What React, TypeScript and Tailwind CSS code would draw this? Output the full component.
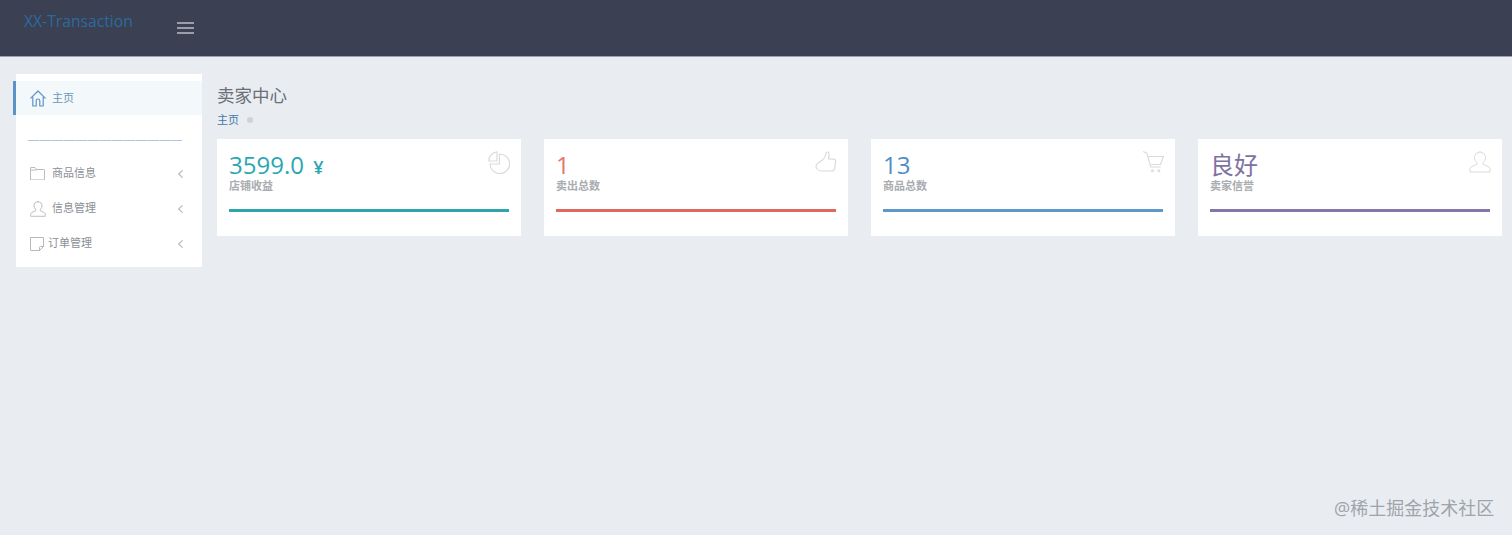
import React from "react";

const font = { fontFamily: '"Open Sans","Noto Sans CJK SC",sans-serif' };

const Svg = ({ w, h, vb, color, sw = 1, children }: { w: number; h: number; vb: string; color: string; sw?: number; children: React.ReactNode }) => (
  <svg width={w} height={h} viewBox={vb} fill="none" stroke={color} strokeWidth={sw} strokeLinecap="round" strokeLinejoin="round">
    {children}
  </svg>
);

const HomeIcon = () => (
  <Svg w={16} h={17} vb="0 0 16 17" color="#5b93c9" sw={1.2}>
    <path d="M0.8 8.2 8 1l7.2 7.2" />
    <path d="M2.8 7v9h3.400v-5.200a1.800 1.800 0 0 1 3.600 0V16h3.400V7" />
  </Svg>
);
const FolderIcon = () => (
  <Svg w={15} h={13} vb="0 0 15 13" color="#b9bcc0">
    <path d="M.5 12.500V1a.5.5 0 0 1 .5-.5h4l1.500 2H14a.5.5 0 0 1 .5.5v9.500z" />
    <path d="M.5 3h6" />
  </Svg>
);
const UserIcon = ({ size, color }: { size: number; color: string }) => (
  <Svg w={size} h={size} vb="0 0 22 22" color={color} sw={22 / size}>
    <path d="M11 1C7.700 1 5.500 3.300 5.500 6.500c0 2.200 1 4 2.500 5.200v1.600c-1.500.9-6.300 2-7 4.300-.2.700 0 3.400 0 3.400h20s.2-2.700 0-3.400c-.7-2.300-5.500-3.400-7-4.300v-1.600c1.500-1.200 2.500-3 2.500-5.200C16.500 3.300 14.300 1 11 1z" />
  </Svg>
);
const NoteIcon = () => (
  <Svg w={14} h={14} vb="0 0 14 14" color="#b5b8bc">
    <path d="M1 .5h12.500v9l-4 4H1a.5.5 0 0 1-.5-.5V1A.5.5 0 0 1 1 .5z" />
    <path d="M13.500 9.500h-3a1 1 0 0 0-1 1v3" />
  </Svg>
);
const Chevron = () => (
  <Svg w={5} h={8} vb="0 0 5 8" color="#b9bcc0" sw={1.2}>
    <path d="M4.300.6.700 4l3.600 3.400" />
  </Svg>
);
const PieIcon = () => (
  <Svg w={22} h={23} vb="0 0 22 23" color="#d8dadc" sw={1.2}>
    <path d="M11.500 3A9.800 9.800 0 1 1 2 13h9.500z" />
    <path d="M9 .8V10H.8A9 9 0 0 1 9 .8z" />
  </Svg>
);
const ThumbIcon = () => (
  <Svg w={22} h={22} vb="0 0 22 22" color="#d8dadc" sw={1.2}>
    <path d="M7 9.500c1.500-1 3-3 3.500-5.500.3-1.800.9-3 2-3 1.300 0 1.800 1.300 1.500 3.200L13.500 8l5 .2c1.500.1 2.300 1.100 2.100 2.500l-.9 6.800c-.2 1.400-1 2.500-2.500 2.500H6.500C3.500 20 1 18 1 15.200c0-2.700 3.200-4.300 6-5.700z" />
  </Svg>
);
const CartIcon = () => (
  <Svg w={21} h={22} vb="0 0 21 22" color="#d8dadc" sw={1.100}>
    <path d="M.5.800 3.800 2l4 14h9.500" />
    <path d="M5 5.500h15.500l-3 8H8" />
    <circle cx="9.500" cy="19.800" r="1" />
    <circle cx="15.800" cy="19.800" r="1" />
  </Svg>
);

function NavItem({ icon, label, tight }: { icon: React.ReactNode; label: string; tight?: boolean }) {
  return (
    <div className="flex items-center h-[35px] pl-[14px] pr-[19px] text-[11px] text-[#8a8f96]">
      <span className={`flex items-center ${tight ? "w-[18px]" : "w-[22px]"}`}>{icon}</span>
      <span className="flex-1">{label}</span>
      <Chevron />
    </div>
  );
}

type CardProps = { value: React.ReactNode; label: string; barClass: string; textClass: string; icon: React.ReactNode };

function Card({ value, label, barClass, textClass, icon }: CardProps) {
  return (
    <div className="flex-none w-[304px] h-[97px] bg-white px-[12px] pt-[12px]">
      <div className="flex justify-between items-start">
        <div className={`text-[24px] leading-[28px] h-[28px] ${textClass}`}>{value}</div>
        <div className="-mr-[1px]">{icon}</div>
      </div>
      <div className="text-[11px] leading-[14px] text-[#a9acb0] font-bold">{label}</div>
      <div className={`h-[3px] mt-[16px] ${barClass}`} />
    </div>
  );
}

export default function App() {
  return (
    <div className="relative min-h-[535px] bg-[#e9edf2] overflow-hidden" style={font}>
      <header className="h-[57px] bg-[#3b4053] border-b border-[#9ea2ab] flex items-start">
        <div className="w-[177px] pl-[24px] pt-[11px] text-[15.700px] leading-[20px] text-[#2b6a9f]">XX-Transaction</div>
        <div className="mt-[22px] w-[17px] flex flex-col gap-[3px]">
          <div className="h-[2px] bg-[#9a9ea8]" />
          <div className="h-[2px] bg-[#9a9ea8]" />
          <div className="h-[2px] bg-[#9a9ea8]" />
        </div>
      </header>
      <div className="flex items-start pl-[16px] pt-[17px]">
        <aside className="relative w-[186px] h-[193px] bg-white pt-[7px] flex-none">
          <div className="relative flex items-center h-[34px] pl-[14px] bg-[#f3f8fb] text-[11px] text-[#6d96b6]">
            <span className="absolute -left-[3px] top-0 w-[3px] h-[34px] bg-[#5b93c9]" />
            <HomeIcon />
            <span className="ml-[6px]">主页</span>
          </div>
          <div className="ml-[12px] mr-[20px] mt-[25px] mb-[15px] h-px bg-[repeating-linear-gradient(90deg,#a9c6de_0,#a9c6de_11px,#d5e3ee_11px,#d5e3ee_12px)]" />
          <NavItem icon={<FolderIcon />} label="商品信息" />
          <NavItem icon={<UserIcon size={16} color="#b9bcc0" />} label="信息管理" />
          <NavItem icon={<NoteIcon />} label="订单管理" tight />
        </aside>
        <main className="ml-[15px] flex-1 pt-[9px]">
          <div className="text-[17.500px] leading-[24px] text-[#6b6f75]">卖家中心</div>
          <div className="flex items-center h-[16px] mt-[5px] text-[11px] text-[#3f78a6]">
            主页
            <span className="ml-[8px] w-[6px] h-[6px] rounded-full bg-[#cfd2d6]" />
          </div>
          <div className="flex gap-[23px] mt-[11px]">
            <Card
              value={<>3599.0 <span className="ml-[3px] text-[18px] font-semibold">¥</span></>}
              label="店铺收益"
              barClass="bg-[#2fa6ad]"
              textClass="text-[#2aa8b2]"
              icon={<PieIcon />}
            />
            <Card value="1" label="卖出总数" barClass="bg-[#e0685f]" textClass="text-[#e8736a]" icon={<ThumbIcon />} />
            <Card value="13" label="商品总数" barClass="bg-[#5f97cb]" textClass="text-[#4f8dc4]" icon={<CartIcon />} />
            <Card value="良好" label="卖家信誉" barClass="bg-[#8476a6]" textClass="text-[#7d73a3]" icon={<UserIcon size={22} color="#d8dadc" />} />
          </div>
        </main>
      </div>
      <div className="absolute left-[1334px] top-[496px] text-[18px] leading-[24px] text-[#a0a4a9] whitespace-nowrap">@稀土掘金技术社区</div>
    </div>
  );
}
